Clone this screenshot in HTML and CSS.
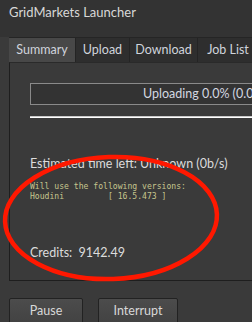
FILE: index.html
```html
<!DOCTYPE html>
<html lang="en">
<head>
  <meta charset="UTF-8">
  <title>GridMarkets Launcher</title>
  <link rel="stylesheet" href="styles.css">
</head>
<body>
  <div class="titlebar">GridMarkets Launcher</div>
  <div class="tabs">
    <div class="tab active">Summary</div>
    <div class="tab">Upload</div>
    <div class="tab">Download</div>
    <div class="tab">Job List</div>
  </div>
  <div class="panel">
    <div class="progress">Uploading 0.0% (0.00b/s)</div>
    <div class="progress-line"></div>
    <div class="eta">Estimated time left: Unknown (0b/s)</div>
    <pre class="versions">Will use the following versions:
Houdini         [ 16.5.473 ]</pre>
    <div class="credits">Credits:&nbsp;&nbsp;9142.49</div>
    <!-- annotation drawn over the summary -->
    <svg class="circle" viewBox="0 0 230 140">
      <ellipse cx="113" cy="68" rx="106" ry="61" transform="rotate(-2 113 68)" />
    </svg>
  </div>
  <div class="actions">
    <button class="button">Pause</button>
    <button class="button">Interrupt</button>
  </div>
</body>
</html>
```

FILE: styles.css
```css
* {
  margin: 0;
  padding: 0;
  box-sizing: border-box;
}

body {
  background: #3a3a3a;
  color: #dcdcdc;
  font-family: 'Lato', sans-serif;
  width: 252px;
  height: 322px;
  overflow: hidden;
}

.titlebar {
  height: 37px;
  background: #333;
  padding: 4px 0 0 9px;
  font-size: 13px;
  color: #d8d8d8;
}

.tabs {
  display: flex;
  margin-left: 9px;
  height: 25px;
  background: #2e2e2e;
  border-top: 1px solid #252525;
  width: 300px;
}

.tab {
  padding: 4px 0 0 0;
  font-size: 12.5px;
  color: #d0d4dc;
  text-align: center;
  border-right: 1px solid #242424;
}

.tab:nth-child(1) { width: 67px; }
.tab:nth-child(2) { width: 54px; }
.tab:nth-child(3) { width: 68px; }
.tab:nth-child(4) { width: 60px; border-right: none; }

.tab.active {
  background: #484848;
}

.panel {
  position: relative;
  margin-left: 9px;
  width: 300px;
  height: 219px;
  border-left: 1px solid #1e1e1e;
  border-bottom: 1px solid #1e1e1e;
  border-top: 1px solid #2a2a2a;
  padding: 20px 0 0 20px;
}

.progress {
  height: 22px;
  width: 280px;
  border: 1px solid #8a8a8a;
  background: #333;
  padding-left: 112px;
  font-size: 12.5px;
  line-height: 19px;
  white-space: nowrap;
  color: #d4d8e0;
}

.progress-line {
  margin-top: 11px;
  height: 2px;
  width: 280px;
  border-top: 1px solid #c8c8c8;
  background: #fff;
}

.eta {
  margin-top: 38px;
  font-size: 12.5px;
  line-height: 16px;
}

.versions {
  margin-top: 9px;
  font-family: 'DejaVu Sans Mono', monospace;
  font-size: 8.1px;
  line-height: 10px;
  color: #c6c68e;
}

.credits {
  margin-top: 44px;
  font-size: 12.5px;
  line-height: 16px;
}

.circle {
  position: absolute;
  left: -12px;
  top: 87px;
  width: 230px;
  height: 140px;
}

.circle ellipse {
  fill: none;
  stroke: #ff1800;
  stroke-width: 4.5;
}

.actions {
  display: flex;
  gap: 15px;
  margin: 17px 0 0 9px;
}

.button {
  height: 27px;
  background: linear-gradient(#4c4c4c, #424242);
  border: 1px solid #222;
  border-radius: 2px;
  color: #d8d8d8;
  font-family: 'Lato', sans-serif;
  font-size: 12.5px;
  padding-bottom: 3px;
}

.button:first-child {
  width: 74px;
}

.button:last-child {
  width: 80px;
}
```
